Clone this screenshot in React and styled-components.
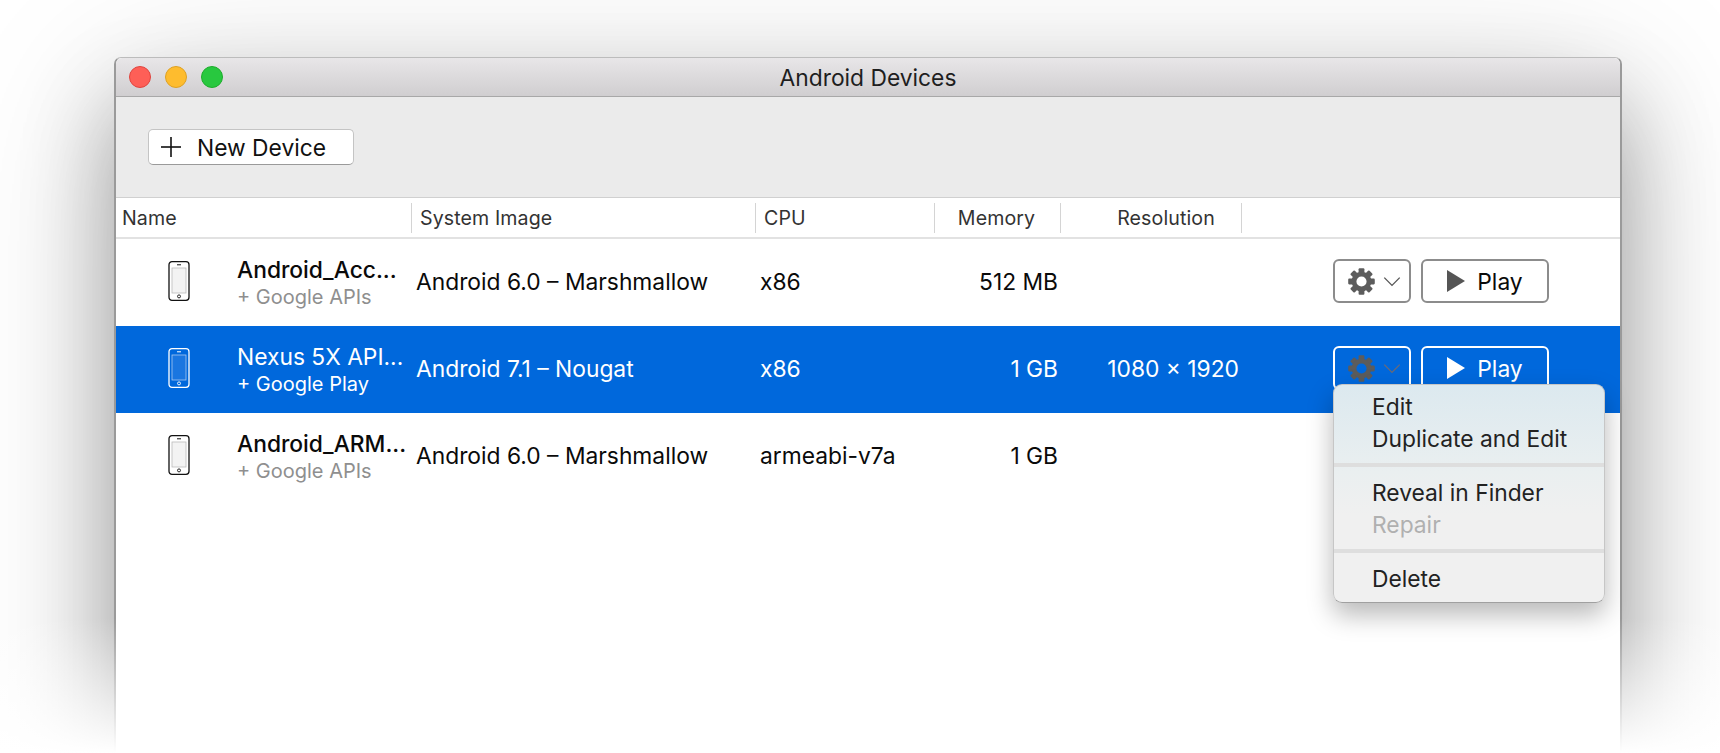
import React from "react";
import styled, { createGlobalStyle } from "styled-components";

const devices = [
  { name: "Android_Acc...", extra: "+ Google APIs", image: "Android 6.0 – Marshmallow", cpu: "x86", memory: "512 MB", resolution: "" },
  { name: "Nexus 5X API...", extra: "+ Google Play", image: "Android 7.1 – Nougat", cpu: "x86", memory: "1 GB", resolution: "1080 × 1920", selected: true },
  { name: "Android_ARM...", extra: "+ Google APIs", image: "Android 6.0 – Marshmallow", cpu: "armeabi-v7a", memory: "1 GB", resolution: "" },
];

const PhoneIcon = ({ selected }) => (
  <svg width="22" height="40" viewBox="0 0 22 40" fill="none" stroke={selected ? "#fff" : "#111"}>
    <rect x="1" y="0.7" width="20" height="38.6" rx="3" strokeWidth="1.3" />
    <rect x="4" y="7" width="14" height="25" fill={selected ? "#1a76e0" : "#f3f3f3"} stroke={selected ? "#a9c8f0" : "#bbb"} strokeWidth="0.8" />
    <line x1="9" y1="3.8" x2="13" y2="3.8" strokeWidth="1" />
    <circle cx="11" cy="35.4" r="1.5" strokeWidth="0.9" />
  </svg>
);

const GearIcon = () => (
  <svg width="27" height="27" viewBox="0 0 26 26" fill="#5c5c5c">
    {[0, 45, 90, 135, 180, 225, 270, 315].map((a) => (
      <rect key={a} x="10.2" y="0.2" width="5.6" height="6" rx="1" transform={`rotate(${a} 13 13)`} />
    ))}
    <circle cx="13" cy="13" r="7.2" fill="none" stroke="#5c5c5c" strokeWidth="4.6" />
  </svg>
);

const ChevronIcon = ({ color }) => (
  <svg width="18" height="11" viewBox="0 0 16 10" fill="none" stroke={color} strokeWidth="1.2">
    <polyline points="1,1.5 8,8.5 15,1.5" />
  </svg>
);

const PlayIcon = ({ color }) => (
  <svg width="18" height="22" viewBox="0 0 18 22" fill={color}>
    <polygon points="0,0 18,11 0,22" />
  </svg>
);

const PlusIcon = () => (
  <svg width="20" height="20" viewBox="0 0 20 20" stroke="#111" strokeWidth="1.6">
    <line x1="0" y1="10" x2="20" y2="10" />
    <line x1="10" y1="0" x2="10" y2="20" />
  </svg>
);

const App = () => (
  <Page>
    <GlobalStyle />
    <Window>
      <TitleBar>
        <Lights>
          <Light color="#fe5f57" edge="#e0443e" />
          <Light color="#febc2e" edge="#dea123" />
          <Light color="#28c83f" edge="#1dad2b" />
        </Lights>
        <Title>Android Devices</Title>
      </TitleBar>
      <Toolbar>
        <NewButton>
          <PlusIcon />
          New Device
        </NewButton>
      </Toolbar>
      <Header>
        <HeadCell first>Name</HeadCell>
        <HeadCell>System Image</HeadCell>
        <HeadCell>CPU</HeadCell>
        <HeadCell center shift="0" trim="2px">Memory</HeadCell>
        <HeadCell center shift="30px">Resolution</HeadCell>
      </Header>
      {devices.map((d) => (
        <Row key={d.name} selected={d.selected}>
          <NameCell>
            <PhoneSlot>
              <PhoneIcon selected={d.selected} />
            </PhoneSlot>
            <NameStack>
              <DeviceName selected={d.selected}>{d.name}</DeviceName>
              <DeviceExtra selected={d.selected}>{d.extra}</DeviceExtra>
            </NameStack>
          </NameCell>
          <Cell>{d.image}</Cell>
          <Cell indent>{d.cpu}</Cell>
          <Cell right>{d.memory}</Cell>
          <Cell right>{d.resolution}</Cell>
          <Actions>
            <MenuAnchor>
              <ActionButton selected={d.selected} wide={false}>
                <GearIcon />
                <ChevronIcon color={d.selected ? "#6a6a78" : "#555"} />
              </ActionButton>
              {d.selected && (
                <Menu>
                  <MenuItem>Edit</MenuItem>
                  <MenuItem>Duplicate and Edit</MenuItem>
                  <MenuSeparator />
                  <MenuItem>Reveal in Finder</MenuItem>
                  <MenuItem disabled>Repair</MenuItem>
                  <MenuSeparator />
                  <MenuItem>Delete</MenuItem>
                </Menu>
              )}
            </MenuAnchor>
            <ActionButton selected={d.selected} wide>
              <PlayIcon color={d.selected ? "#fff" : "#555"} />
              Play
            </ActionButton>
          </Actions>
        </Row>
      ))}
    </Window>
    <BottomFade />
  </Page>
);

const GlobalStyle = createGlobalStyle`
  html, body {
    margin: 0;
    height: 100%;
    overflow: hidden;
    background: #fff;
  }
  body {
    font-family: Inter, "Liberation Sans", sans-serif;
    -webkit-font-smoothing: antialiased;
  }
`;

const Page = styled.div`
  position: relative;
  height: 753px;
  box-sizing: border-box;
  padding: 57px 98px 0 114px;
  overflow: hidden;
`;

const Window = styled.div`
  height: 800px;
  box-sizing: border-box;
  background: #fff;
  border-radius: 7px 7px 0 0;
  border: 1px solid #9a9a9a;
  border-top-color: #bcbcbc;
  border-width: 1px 2px 0 2px;
  box-shadow: 0 50px 90px rgba(0, 0, 0, 0.3), 0 30px 160px rgba(0, 0, 0, 0.18);
`;

const TitleBar = styled.div`
  display: grid;
  grid-template-columns: 1fr auto 1fr;
  align-items: center;
  height: 38px;
  background: linear-gradient(#e8e6e8, #d0ced0);
  border-bottom: 1px solid #a8a8a8;
  border-radius: 6px 6px 0 0;
`;

const Lights = styled.div`
  display: flex;
  gap: 14px;
  padding-left: 13px;
`;

const Light = styled.span`
  width: 20px;
  height: 20px;
  border-radius: 50%;
  background: ${(p) => p.color};
  border: 1px solid ${(p) => p.edge};
`;

const Title = styled.div`
  font-size: 22.8px;
  color: #1e1e1e;
`;

const Toolbar = styled.div`
  display: flex;
  align-items: center;
  height: 101px;
  padding: 0 0 0 32px;
  box-sizing: border-box;
  background: #ebebeb;
  border-bottom: 1px solid #d0d0d0;
`;

const NewButton = styled.div`
  display: flex;
  align-items: center;
  gap: 16px;
  width: 206px;
  height: 36px;
  box-sizing: border-box;
  padding-left: 12px;
  background: #fff;
  border-radius: 5px;
  border: 1px solid #c4c4c4;
  border-bottom-color: #9a9a9a;
  font-size: 22.8px;
  color: #111;
`;

const columns = "296px 344px 179px 126px 181px 1fr";

const Header = styled.div`
  display: grid;
  grid-template-columns: ${columns};
  align-items: center;
  height: 41px;
  box-sizing: border-box;
  border-bottom: 2px solid #e2e2e2;
`;

const HeadCell = styled.div`
  height: 30px;
  line-height: 30px;
  font-size: 19.6px;
  letter-spacing: 0.1px;
  color: #333;
  white-space: nowrap;
  text-align: ${(p) => (p.center ? "center" : "left")};
  padding-left: ${(p) => (p.shift ? p.shift : p.first ? "6px" : "8px")};
  padding-right: ${(p) => p.trim || "0"};
  border-right: 1px solid #d4d4d4;
`;

const Row = styled.div`
  display: grid;
  grid-template-columns: ${columns};
  align-items: center;
  height: 87px;
  box-sizing: border-box;
  padding-bottom: 3px;
  background: ${(p) => (p.selected ? "#0068dc" : "#fff")};
  color: ${(p) => (p.selected ? "#fff" : "#0a0a0a")};
`;

const NameCell = styled.div`
  display: flex;
  align-items: center;
  white-space: nowrap;
`;

const PhoneSlot = styled.div`
  display: flex;
  width: 121px;
  padding-left: 52px;
  box-sizing: border-box;
`;

const NameStack = styled.div`
  padding-top: 4px;
`;

const DeviceName = styled.div`
  font-size: 22.8px;
  font-weight: ${(p) => (p.selected ? 400 : 500)};
  line-height: 28px;
`;

const DeviceExtra = styled.div`
  font-size: 20px;
  line-height: 27px;
  color: ${(p) => (p.selected ? "#fff" : "#8f8f8f")};
`;

const Cell = styled.div`
  font-size: 22.8px;
  white-space: nowrap;
  padding-left: ${(p) => (p.right ? "0" : "4px")};
  text-align: ${(p) => (p.right ? "right" : "left")};
  padding-right: ${(p) => (p.right ? "3px" : "0")};
`;

const Actions = styled.div`
  display: flex;
  gap: 10px;
  padding-left: 91px;
`;

const MenuAnchor = styled.div`
  position: relative;
`;

const ActionButton = styled.div`
  display: flex;
  align-items: center;
  justify-content: center;
  gap: ${(p) => (p.wide ? "12px" : "8px")};
  width: ${(p) => (p.wide ? "128px" : "78px")};
  height: 44px;
  box-sizing: border-box;
  padding-left: ${(p) => (p.wide ? "0" : "5px")};
  border-radius: 6px;
  border: 2px solid ${(p) => (p.selected ? "#fff" : "#8c8c8c")};
  font-size: 22.8px;
`;

const Menu = styled.div`
  position: absolute;
  z-index: 2;
  top: 38px;
  left: 0;
  width: 272px;
  height: 219px;
  box-sizing: border-box;
  padding-top: 6px;
  border-radius: 9px;
  border: 1px solid #c6c6c6;
  border-bottom-color: #a0a0a0;
  background: linear-gradient(#dce9ef 0, #eaeff0 40%, #f0f0f0 60%);
  box-shadow: 0 12px 26px rgba(0, 0, 0, 0.28);
`;

const MenuItem = styled.div`
  height: 32px;
  line-height: 32px;
  padding-left: 38px;
  font-size: 22.8px;
  white-space: nowrap;
  color: ${(p) => (p.disabled ? "#b0b0b0" : "#222")};
`;

const MenuSeparator = styled.div`
  height: 4px;
  margin: 8px 0 10px;
  background: #dedede;
`;

const BottomFade = styled.div`
  position: absolute;
  left: 0;
  right: 0;
  bottom: 0;
  height: 135px;
  pointer-events: none;
  background: linear-gradient(rgba(255, 255, 255, 0), #fff);
`;

export default App;
